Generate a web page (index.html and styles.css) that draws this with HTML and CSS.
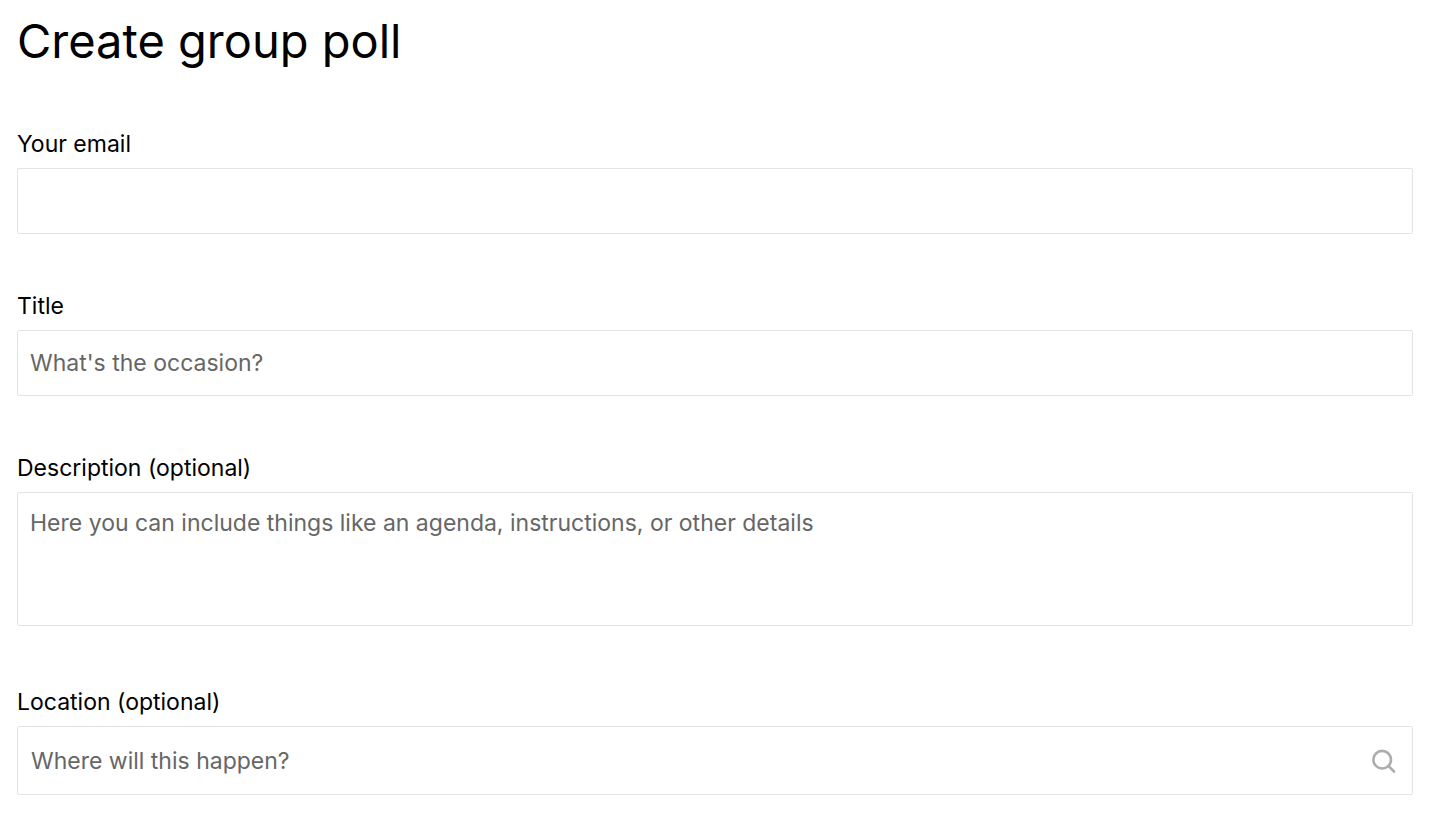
FILE: index.html
```html
<!DOCTYPE html>
<html lang="en">
<head>
<meta charset="utf-8">
<meta name="viewport" content="width=device-width, initial-scale=1">
<title>Create group poll</title>
<link rel="stylesheet" href="styles.css">
</head>
<body>
<main class="page">
  <h1 class="page-title">Create group poll</h1>
  <form class="poll-form">
    <div class="field">
      <label class="field-label" for="email">Your email</label>
      <input class="control" id="email" type="email">
    </div>
    <div class="field">
      <label class="field-label" for="title">Title</label>
      <input class="control" id="title" type="text" placeholder="What's the occasion?">
    </div>
    <div class="field field-tall">
      <label class="field-label" for="description">Description (optional)</label>
      <textarea class="control control-area" id="description" placeholder="Here you can include things like an agenda, instructions, or other details"></textarea>
    </div>
    <div class="field">
      <label class="field-label" for="location">Location (optional)</label>
      <div class="search-box">
        <input class="search-input" id="location" type="text" placeholder="Where will this happen?">
        <svg class="search-icon" viewBox="0 0 24 24" aria-hidden="true"><circle cx="10.2" cy="10.7" r="8.8"/><path d="M16.6 17.1l5.4 5.4"/></svg>
      </div>
    </div>
  </form>
</main>
</body>
</html>
```

FILE: styles.css
```css
* {
  box-sizing: border-box;
}

body {
  margin: 0;
  background: #fff;
  color: #000;
  font-family: Inter, "Liberation Sans", Arial, sans-serif;
}

.page {
  padding: 12px 25px 28px 17px;
}

.page-title {
  margin: 0 0 58px;
  font-size: 47px;
  line-height: 58px;
  font-weight: 400;
}

.poll-form {
  display: flex;
  flex-direction: column;
  gap: 56px;
}

.field {
  display: flex;
  flex-direction: column;
  gap: 8px;
}

.field-tall {
  padding-bottom: 4px;
}

.field-label {
  font-size: 23px;
  line-height: 32px;
}

.control,
.search-box {
  width: 100%;
  height: 66px;
  border: 1px solid #e3e3e3;
  border-radius: 2px;
  background: #fff;
}

.control,
.search-input {
  padding: 0 12px;
  color: #000;
  font: inherit;
  font-size: 23px;
  line-height: 32px;
  outline: none;
}

.control-area {
  display: block;
  height: 134px;
  padding: 14px 12px;
  resize: none;
}

.control::placeholder,
.search-input::placeholder {
  color: #666;
  opacity: 1;
}

.control:focus,
.search-box:focus-within {
  border-color: #888;
}

.search-box {
  display: flex;
  align-items: center;
  height: 69px;
  padding-right: 16px;
}

.search-input {
  flex: 1;
  min-width: 0;
  height: 100%;
  padding-left: 13px;
  border: 0;
  background: transparent;
}

.search-icon {
  width: 24px;
  height: 24px;
  fill: none;
  stroke: #adadad;
  stroke-width: 2.6;
  stroke-linecap: round;
}
```
